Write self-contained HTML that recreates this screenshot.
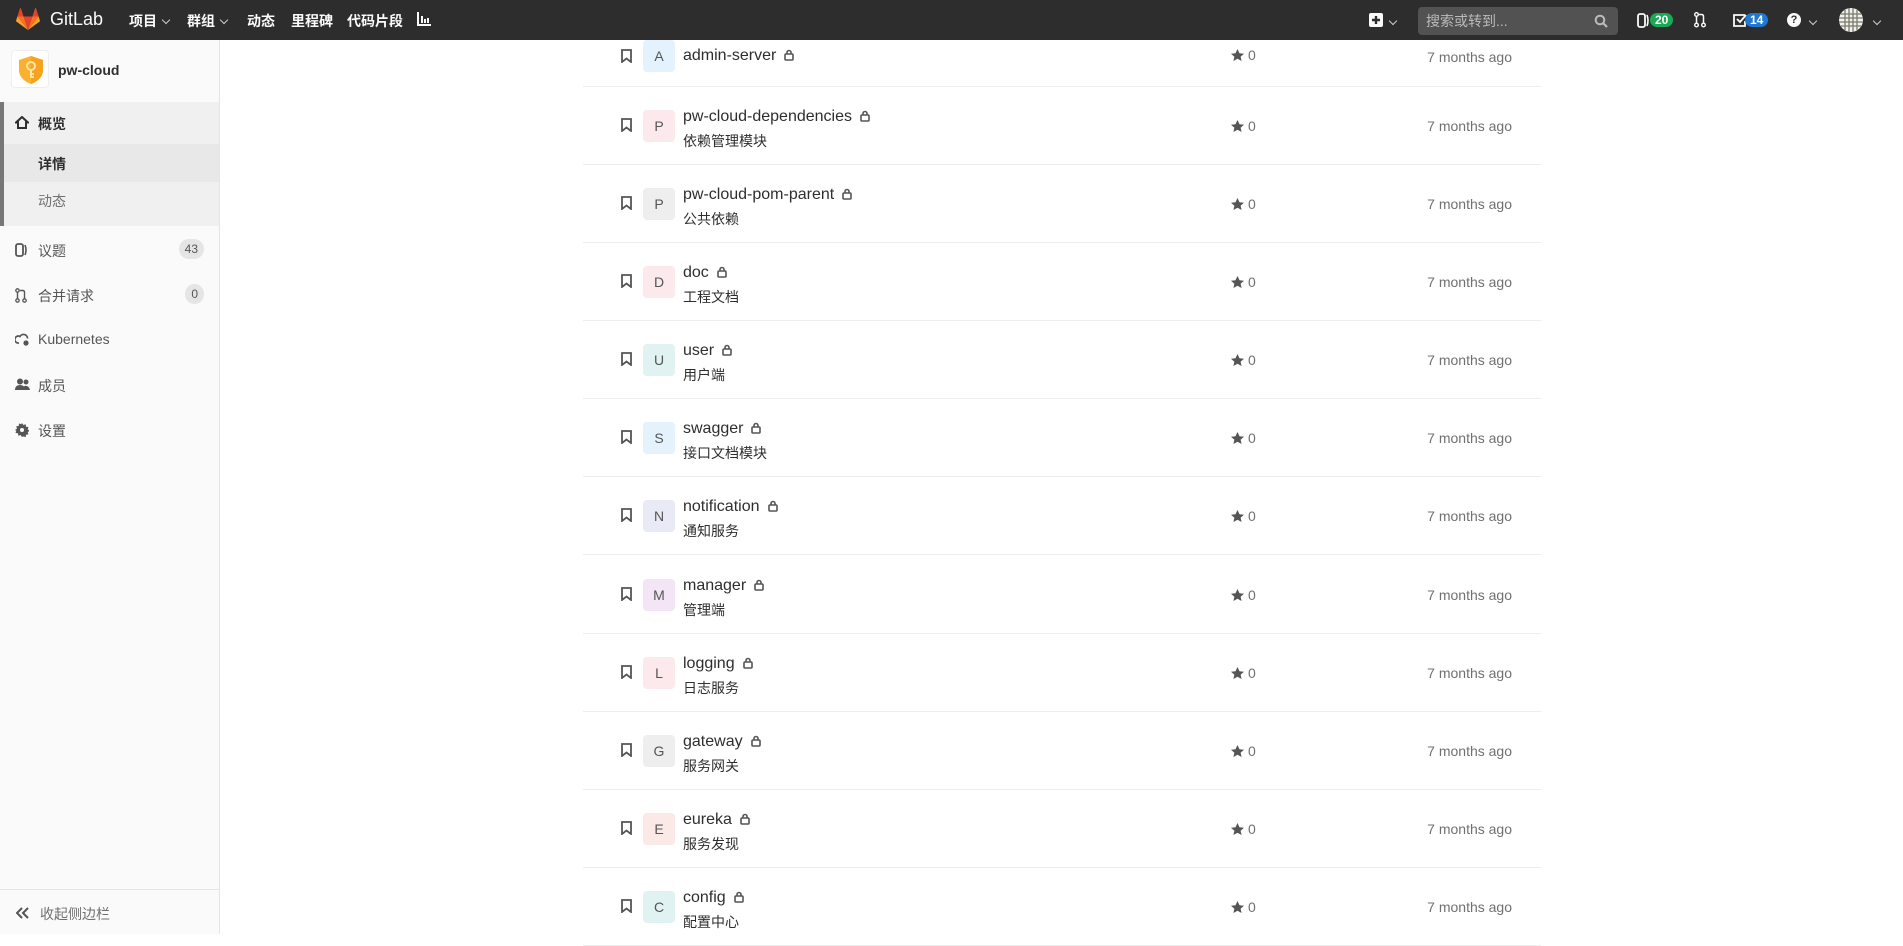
<!DOCTYPE html>
<html><head><meta charset="utf-8">
<style>
*{margin:0;padding:0;box-sizing:border-box}
body{width:1903px;height:934px;overflow:hidden;background:#fff;font-family:"Liberation Sans","Noto Sans CJK SC",sans-serif;position:relative;color:#2e2e2e}
.top{position:absolute;left:0;top:0;width:1903px;height:40px;background:#2d2d2d;z-index:5}
.top .t{position:absolute;top:11px;color:#fafafa;font-size:14px;font-weight:bold}
.car{display:inline-block;width:6px;height:6px;border-right:1.5px solid #ccc;border-bottom:1.5px solid #ccc;transform:rotate(45deg);margin-left:6px;position:relative;top:-3px}
.side{position:absolute;left:0;top:40px;width:220px;height:894px;background:#fafafa;border-right:1px solid #e5e5e5}
.si{position:absolute;left:0;width:219px;height:20px;font-size:14px;color:#555}
.si .ic{position:absolute;left:15px;top:2px}
.si .lb{position:absolute;left:38px;top:0}
.badge{position:absolute;right:15px;top:-2px;background:#e5e5e5;border-radius:10px;font-size:12px;color:#555;padding:2px 6px;line-height:16px}
.row{position:absolute;left:583px;width:958px;height:78px;border-bottom:1px solid #eee}
.bm{position:absolute;left:38px;top:31px}
.av{position:absolute;left:60px;top:23px;width:32px;height:32px;border-radius:4px;font-size:14px;color:#555;text-align:center;line-height:32px}
.ti{position:absolute;left:100px;font-size:16px;color:#2e2e2e;white-space:nowrap}
.ti svg{margin-left:8px;vertical-align:-1px}
.de{position:absolute;left:100px;top:44px;font-size:14px;color:#2e2e2e}
.st{position:absolute;left:648px;top:31px;font-size:14px;color:#707070}
.st svg{vertical-align:-1px;margin-right:4px}
.tm{position:absolute;right:29px;top:31px;font-size:14px;color:#707070}
</style></head><body>
<div class="top">
<svg style="position:absolute;left:16px;top:8px" width="24" height="23" viewBox="0 0 24 23"><path d="M12 22L16.4 8.5H7.6Z" fill="#e24329"/><path d="M12 22L7.6 8.5H1.4Z" fill="#fc6d26"/><path d="M1.4 8.5L0.1 12.6c-.1.4 0 .8.4 1L12 22Z" fill="#fca326"/><path d="M1.4 8.5H7.6L4.9.3c-.1-.4-.7-.4-.9 0Z" fill="#e24329"/><path d="M12 22L16.4 8.5H22.6Z" fill="#fc6d26"/><path d="M22.6 8.5l1.3 4.1c.1.4 0 .8-.4 1L12 22Z" fill="#fca326"/><path d="M22.6 8.5H16.4L19.1.3c.1-.4.7-.4.9 0Z" fill="#e24329"/></svg>
<div class="t" style="left:50px;top:9px;font-size:18px;font-weight:normal">GitLab</div>
<div class="t" style="left:129px">项目<span class="car"></span></div>
<div class="t" style="left:187px">群组<span class="car"></span></div>
<div class="t" style="left:247px">动态</div>
<div class="t" style="left:291px">里程碑</div>
<div class="t" style="left:347px">代码片段</div>
<svg style="position:absolute;left:417px;top:12px" width="14" height="14" viewBox="0 0 14 14"><path d="M0 0h2v12h12v2H0Z M4 4h2v7H4Z M7 7h2v4H7Z M10 6h2v5h-2Z" fill="#fafafa"/></svg>
<svg style="position:absolute;left:1369px;top:13px" width="14" height="14"><rect width="14" height="14" rx="2" fill="#fafafa"/><path d="M7 3v8M3 7h8" stroke="#2d2d2d" stroke-width="2.4"/></svg>
<span class="car" style="position:absolute;left:1384px;top:18px"></span>
<div style="position:absolute;left:1418px;top:7px;width:200px;height:28px;background:#525252;border-radius:4px;color:#bbb;font-size:14px;line-height:28px;padding-left:8px">搜索或转到...
<svg style="position:absolute;right:10px;top:7px" width="14" height="14"><circle cx="6" cy="6" r="4.3" stroke="#bbb" stroke-width="2" fill="none"/><path d="M9 9l4 4" stroke="#bbb" stroke-width="2.2"/></svg></div>
<svg style="position:absolute;left:1637px;top:13px" width="12" height="15"><rect x="1" y="1" width="7" height="13" rx="2" stroke="#fafafa" stroke-width="1.8" fill="none"/><path d="M10 2q2 5.5 0 11" stroke="#fafafa" stroke-width="1.6" fill="none"/></svg>
<div style="position:absolute;left:1650px;top:13px;background:#1aaa55;color:#fff;font-size:12px;font-weight:bold;border-radius:8px;padding:0 5px;line-height:14px">20</div>
<svg style="position:absolute;left:1694px;top:12px" width="12" height="16"><circle cx="2.5" cy="2.5" r="1.8" stroke="#fafafa" stroke-width="1.4" fill="none"/><circle cx="2.5" cy="13" r="1.8" stroke="#fafafa" stroke-width="1.4" fill="none"/><circle cx="9.5" cy="13" r="1.8" stroke="#fafafa" stroke-width="1.4" fill="none"/><path d="M2.5 4.5v6.5M9.5 11V4.5q0-2-2-2H5" stroke="#fafafa" stroke-width="1.5" fill="none"/></svg>
<svg style="position:absolute;left:1733px;top:13px" width="14" height="14"><path d="M12 2H1v11h11V8" stroke="#fafafa" stroke-width="1.8" fill="none"/><path d="M4 6l3 3 6-7" stroke="#fafafa" stroke-width="1.8" fill="none"/></svg>
<div style="position:absolute;left:1745px;top:13px;background:#1f78d1;color:#fff;font-size:12px;font-weight:bold;border-radius:8px;padding:0 5px;line-height:14px">14</div>
<div style="position:absolute;left:1787px;top:13px;width:14px;height:14px;border-radius:7px;background:#fafafa;color:#2d2d2d;font-size:11px;font-weight:bold;text-align:center;line-height:14px">?</div>
<span class="car" style="position:absolute;left:1804px;top:18px"></span>
<svg style="position:absolute;left:1839px;top:8px" width="24" height="24"><circle cx="12" cy="12" r="12" fill="#f0f0f0"/><path d="M6 2v20M10 0v24M14 0v24M18 2v20M2 6h20M0 10h24M0 14h24M2 18h20" stroke="#7a7a6a" stroke-width="1.3"/></svg>
<span class="car" style="position:absolute;left:1868px;top:18px"></span>
</div>

<div class="side">
<div style="position:absolute;left:11px;top:10px;width:38px;height:38px;background:#fff;border:1px solid #eee;border-radius:4px">
<svg style="position:absolute;left:5px;top:4px" width="28" height="30" viewBox="0 0 28 30"><path d="M14 1L26 5v10c0 7-6 12-12 14C8 27 2 22 2 15V5Z" fill="#fbb12c"/><path d="M14 1L26 5v10c0 7-6 12-12 14Z" fill="#f8a21d"/><circle cx="14" cy="11" r="4" stroke="#fde4a8" stroke-width="2" fill="none"/><path d="M14 15v8M14 19h3M14 22h3" stroke="#fde4a8" stroke-width="2"/></svg></div>
<div style="position:absolute;left:58px;top:22px;font-size:14px;font-weight:bold;color:#2e2e2e">pw-cloud</div>
<div style="position:absolute;left:0;top:62px;width:219px;height:124px;background:#f0f0f0;border-left:4px solid #777"></div>
<div style="position:absolute;left:4px;top:104px;width:215px;height:38px;background:#e8e8e8"></div>
<div class="si" style="top:74px;font-weight:bold;color:#2e2e2e"><svg class="ic" width="14" height="13"><path d="M7 1L1 6.5h2V12h8V6.5h2Z" stroke="#2e2e2e" stroke-width="2" fill="none"/></svg><span class="lb">概览</span></div>
<div class="si" style="top:114px;font-weight:bold;color:#2e2e2e"><span class="lb">详情</span></div>
<div class="si" style="top:151px"><span class="lb" style="color:#707070">动态</span></div>
<div class="si" style="top:201px"><svg class="ic" width="14" height="15"><rect x="1" y="1" width="7" height="12" rx="2" stroke="#555" stroke-width="1.8" fill="none"/><path d="M10 2q2 5 0 10" stroke="#555" stroke-width="1.6" fill="none"/></svg><span class="lb">议题</span><span class="badge">43</span></div>
<div class="si" style="top:246px"><svg class="ic" width="12" height="15"><circle cx="2.5" cy="2.5" r="1.7" stroke="#555" stroke-width="1.3" fill="none"/><circle cx="2.5" cy="12.5" r="1.7" stroke="#555" stroke-width="1.3" fill="none"/><circle cx="9.5" cy="12.5" r="1.7" stroke="#555" stroke-width="1.3" fill="none"/><path d="M2.5 4.5v6M9.5 10.5V4.5q0-2-2-2H5" stroke="#555" stroke-width="1.4" fill="none"/></svg><span class="lb">合并请求</span><span class="badge">0</span></div>
<div class="si" style="top:291px"><svg class="ic" width="15" height="14"><path d="M4 10a3.5 3.5 0 1 1 1-6.5 4 4 0 0 1 7.5 2" stroke="#555" stroke-width="1.7" fill="none"/><circle cx="11" cy="10" r="2.6" fill="#555"/></svg><span class="lb">Kubernetes</span></div>
<div class="si" style="top:336px"><svg class="ic" width="15" height="13"><circle cx="5" cy="3.5" r="3" fill="#555"/><circle cx="11" cy="4" r="2.5" fill="#555"/><path d="M0 12q0-5 5-5t5 5Z M9 8q5-1 6 4h-5Z" fill="#555"/></svg><span class="lb">成员</span></div>
<div class="si" style="top:381px"><svg class="ic" width="14" height="14" viewBox="0 0 14 14"><path d="M7 0l1.4 2 2.3-.8.3 2.5 2.5.3-.8 2.3 2 1.4-2 1.4.8 2.3-2.5.3-.3 2.5-2.3-.8L7 14l-1.4-2-2.3.8-.3-2.5-2.5-.3.8-2.3L0 7l2-1.4-.8-2.3 2.5-.3.3-2.5 2.3.8Z" fill="#555"/><circle cx="7" cy="7" r="2" fill="#fafafa"/></svg><span class="lb">设置</span></div>
<div style="position:absolute;left:0;top:849px;width:219px;height:45px;border-top:1px solid #e5e5e5">
<svg style="position:absolute;left:16px;top:17px" width="14" height="12"><path d="M6 1L1 6l5 5M12 1L7 6l5 5" stroke="#555" stroke-width="2" fill="none"/></svg>
<span style="position:absolute;left:40px;top:14px;font-size:14px;color:#707070">收起侧边栏</span></div>
</div>

<div class="row" style="top:9px">
<svg class="bm" style="top:40px" width="11" height="14"><path d="M1 1h9v12l-4.5-3.5L1 13Z" stroke="#555" stroke-width="1.8" fill="none"/></svg>
<div class="av" style="background:#e3f2fd;top:31px">A</div>
<div class="ti" style="top:38px">admin-server<svg width="10" height="12"><rect x="1" y="5" width="8" height="6" rx="1" stroke="#555" stroke-width="1.6" fill="none"/><path d="M3 5V3.5a2 2 0 0 1 4 0V5" stroke="#555" stroke-width="1.6" fill="none"/></svg></div>
<div class="st" style="top:38px"><svg width="13" height="12"><path d="M6.5 0l2 4.2 4.5.5-3.4 3 1 4.3-4.1-2.3L2.4 12l1-4.3L0 4.7l4.5-.5Z" fill="#555"/></svg>0</div>
<div class="tm" style="top:40px">7 months ago</div>
</div>

<div id="rows"></div>
<script>
var d=[["P","#fbe9eb","pw-cloud-dependencies","依赖管理模块",87],["P","#eee","pw-cloud-pom-parent","公共依赖",165],["D","#fbe9eb","doc","工程文档",243],["U","#e0f2f1","user","用户端",321],["S","#e3f2fd","swagger","接口文档模块",399],["N","#e8eaf6","notification","通知服务",477],["M","#f3e5f5","manager","管理端",556],["L","#fbe9eb","logging","日志服务",634],["G","#eee","gateway","服务网关",712],["E","#fbe9e7","eureka","服务发现",790],["C","#e0f2f1","config","配置中心",868]];
var h="";
d.forEach(function(r){h+='<div class="row" style="top:'+r[4]+'px"><svg class="bm" width="11" height="14"><path d="M1 1h9v12l-4.5-3.5L1 13Z" stroke="#555" stroke-width="1.8" fill="none"/></svg><div class="av" style="background:'+r[1]+'">'+r[0]+'</div><div class="ti" style="top:21px">'+r[2]+'<svg width="10" height="12"><rect x="1" y="5" width="8" height="6" rx="1" stroke="#555" stroke-width="1.6" fill="none"/><path d="M3 5V3.5a2 2 0 0 1 4 0V5" stroke="#555" stroke-width="1.6" fill="none"/></svg></div><div class="de">'+r[3]+'</div><div class="st"><svg width="13" height="12"><path d="M6.5 0l2 4.2 4.5.5-3.4 3 1 4.3-4.1-2.3L2.4 12l1-4.3L0 4.7l4.5-.5Z" fill="#555"/></svg>0</div><div class="tm">7 months ago</div></div>';});
document.getElementById("rows").innerHTML=h;
</script>
</body></html>
